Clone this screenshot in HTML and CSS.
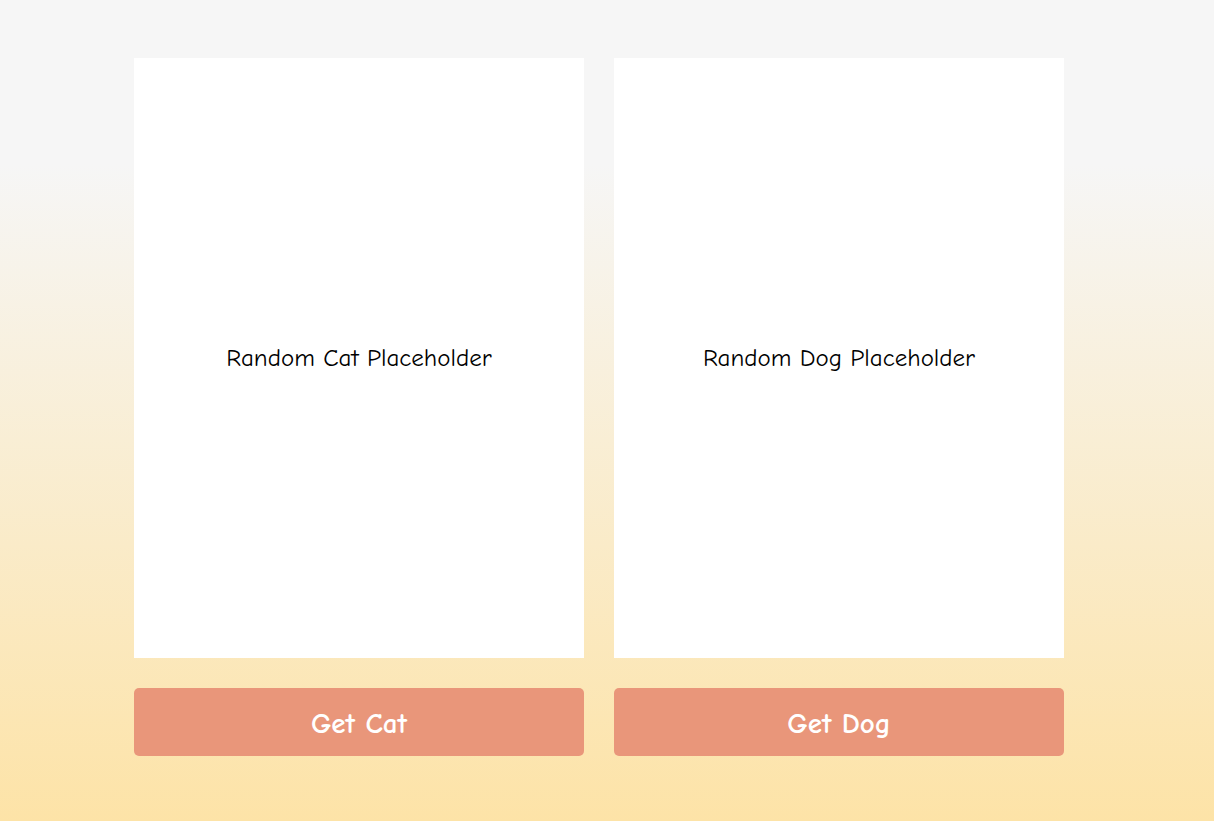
FILE: index.html
```html
<!DOCTYPE html>
<html>
<head>
<meta charset="utf-8">
<link rel="stylesheet" href="styles.css">
</head>
<body>
<main class="grid">
  <div class="col">
    <div class="card"><span class="ph">Random Cat Placeholder</span></div>
    <button class="btn">Get Cat</button>
  </div>
  <div class="col">
    <div class="card"><span class="ph">Random Dog Placeholder</span></div>
    <button class="btn">Get Dog</button>
  </div>
</main>
</body>
</html>
```
FILE: styles.css
```css
html, body {
  margin: 0;
  height: 100%;
}
body {
  background: linear-gradient(to bottom, #f6f6f6 20%, #fde3a7 100%);
  font-family: "Comic Sans MS", "Comic Neue", cursive, sans-serif;
  min-height: 821px;
}
.grid {
  display: grid;
  grid-template-columns: 450px 450px;
  column-gap: 30px;
  padding: 58px 0 0 134px;
}
.col {
  display: flex;
  flex-direction: column;
  gap: 30px;
}
.card {
  height: 600px;
  background: #ffffff;
  display: flex;
  align-items: center;
  justify-content: center;
}
.ph {
  font-size: 25px;
  color: #000;
  padding-bottom: 2px;
}
.btn {
  height: 68px;
  border: none;
  border-radius: 5px;
  background: #e9967a;
  color: #fff;
  font-family: inherit;
  font-size: 29px;
  font-weight: bold;
  padding-top: 3px;
  cursor: pointer;
}
```
